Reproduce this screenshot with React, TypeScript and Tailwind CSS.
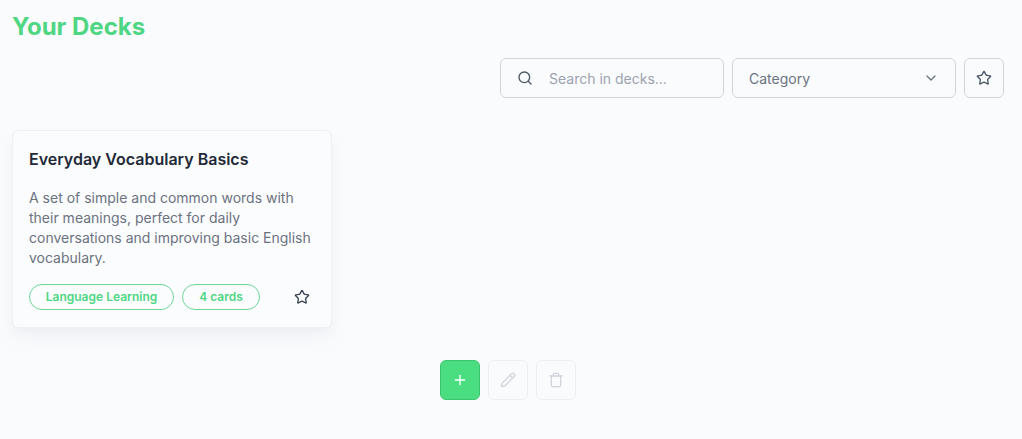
import { Search, ChevronDown, Star, Plus, Pencil, Trash } from 'lucide-react';

export default function App() {
  return (
    <div className="h-[439px] overflow-hidden bg-[#f9fbfd] px-3 pt-3 font-['Inter',sans-serif]">
      {/* Titulo */}
      <h1 className="text-2xl leading-[30px] font-bold text-[#4fd683]">Your Decks</h1>

      {/* Filtros */}
      <div className="mt-4 mr-[6px] flex justify-end gap-2">
        <div className="flex h-10 w-56 items-center rounded-md border border-[#d1d5db] pl-4">
          <Search className="h-4 w-4 text-[#4b5563]" strokeWidth={2} />
          <span className="ml-4 pt-[2px] text-sm text-[#9ca3af]">Search in decks...</span>
        </div>
        <div className="flex h-10 w-56 items-center justify-between rounded-md border border-[#d1d5db] pr-4 pl-4">
          <span className="pt-[2px] text-sm text-[#6b7280]">Category</span>
          <ChevronDown className="h-4 w-4 text-[#6b7280]" />
        </div>
        <button className="flex h-10 w-10 items-center justify-center rounded-md border border-[#d1d5db]">
          <Star className="h-4 w-4 text-[#4b5563]" />
        </button>
      </div>

      {/* Tarjeta */}
      <div className="mt-8 flex h-[198px] w-80 flex-col rounded-md border border-[#eef0f3] bg-[#fbfcfe] px-4 pt-[18px] shadow-lg shadow-gray-200/50">
        <h2 className="text-base leading-5 font-semibold text-[#1f2937]">Everyday Vocabulary Basics</h2>
        <p className="mt-[19px] text-sm leading-5 text-[#6b7280]">
          A set of simple and common words with their meanings, perfect for daily conversations and improving basic English vocabulary.
        </p>
        <div className="mt-4 flex items-center gap-2">
          <span className="flex h-[26px] w-[145px] items-center justify-center rounded-full border border-[#6fd796] text-xs font-semibold text-[#4fd683]">Language Learning</span>
          <span className="flex h-[26px] w-[78px] items-center justify-center rounded-full border border-[#6fd796] text-xs font-semibold text-[#4fd683]">4 cards</span>
          <Star className="mr-[5px] ml-auto h-4 w-4 text-[#374151]" />
        </div>
      </div>

      {/* Acciones */}
      <div className="mt-8 flex justify-center gap-2 pr-[6px]">
        <button className="flex h-10 w-10 items-center justify-center rounded-md border border-[#3cc56f] bg-[#4ade80]">
          <Plus className="h-4 w-4 text-white" />
        </button>
        <button className="flex h-10 w-10 items-center justify-center rounded-md border border-[#eceef1]">
          <Pencil className="h-4 w-4 text-[#d1d5db]" />
        </button>
        <button className="flex h-10 w-10 items-center justify-center rounded-md border border-[#eceef1]">
          <Trash className="h-4 w-4 text-[#d1d5db]" />
        </button>
      </div>
    </div>
  );
}
